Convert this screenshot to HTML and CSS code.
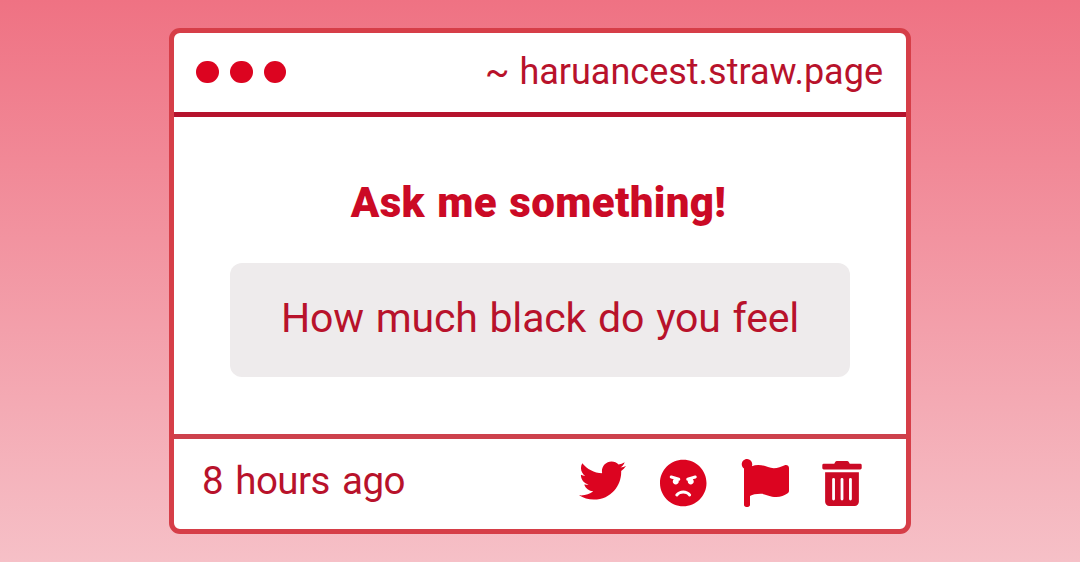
FILE: index.html
```html
<!DOCTYPE html>
<html lang="en">
<head>
  <meta charset="utf-8">
  <title>Ask me something!</title>
  <link rel="stylesheet" href="styles.css">
</head>
<body>
  <div class="card">
    <div class="card-header">
      <div class="dots">
        <span class="dot"></span>
        <span class="dot"></span>
        <span class="dot"></span>
      </div>
      <span class="site">~ haruancest.straw.page</span>
    </div>

    <div class="card-body">
      <h1>Ask me something!</h1>
      <div class="message"><p>How much black do you feel</p></div>
    </div>

    <div class="card-footer">
      <span class="time">8 hours ago</span>
      <div class="actions">
        <svg class="icon twitter" viewBox="0 0 512 512"><path d="M459.37 151.716c.325 4.548.325 9.097.325 13.645 0 138.72-105.583 298.558-298.558 298.558-59.452 0-114.68-17.219-161.137-47.106 8.447.974 16.568 1.299 25.34 1.299 49.055 0 94.213-16.568 130.274-44.832-46.132-.975-84.792-31.188-98.112-72.772 6.498.974 12.995 1.624 19.818 1.624 9.421 0 18.843-1.3 27.614-3.573-48.081-9.747-84.143-51.98-84.143-102.985v-1.299c13.969 7.797 30.214 12.67 47.431 13.319-28.264-18.843-46.781-51.005-46.781-87.391 0-19.492 5.197-37.36 14.294-52.954 51.655 63.675 129.3 105.258 216.365 109.807-1.624-7.797-2.599-15.918-2.599-24.04 0-57.828 46.782-104.934 104.934-104.934 30.213 0 57.502 12.67 76.67 33.137 23.715-4.548 46.456-13.32 66.599-25.34-7.798 24.366-24.366 44.833-46.132 57.827 21.117-2.273 41.584-8.122 60.426-16.243-14.292 20.791-32.161 39.308-52.628 54.253z"/></svg>
        <svg class="icon angry" viewBox="0 0 496 512"><path d="M248 8C111 8 0 119 0 256s111 248 248 248 248-111 248-248S385 8 248 8zM136 240c0-9.3 4.1-17.5 10.5-23.4l-31-9.3c-8.5-2.5-13.3-11.5-10.7-19.9 2.5-8.5 11.4-13.2 19.9-10.7l80 24c8.5 2.5 13.3 11.5 10.7 19.9-2.1 6.9-8.4 11.4-15.3 11.4-.5 0-1.1-.2-1.7-.2.7 2.7 1.7 5.3 1.7 8.2 0 17.7-14.3 32-32 32S136 257.7 136 240zm168 154.2c-27.8-33.4-84.2-33.4-112.1 0-13.5 16.3-38.2-4.2-24.6-20.5 20-24 49.4-37.8 80.6-37.8s60.6 13.8 80.6 37.8c13.8 16.5-11.1 36.6-24.5 20.5zm76.6-186.9l-31 9.3c6.3 5.8 10.5 14.1 10.5 23.4 0 17.7-14.3 32-32 32s-32-14.3-32-32c0-2.9.9-5.6 1.7-8.2-.6.1-1.1.2-1.7.2-6.9 0-13.2-4.5-15.3-11.4-2.5-8.5 2.3-17.4 10.7-19.9l80-24c8.4-2.5 17.4 2.3 19.9 10.7 2.5 8.5-2.3 17.4-10.8 19.9z"/></svg>
        <svg class="icon flag" viewBox="0 0 512 512"><path d="M349.565 98.783C295.978 98.783 251.721 64 184.348 64c-24.955 0-47.309 4.384-68.045 12.013a55.947 55.947 0 0 0 3.586-23.562C118.117 24.015 94.806 1.206 66.338.048 34.345-1.254 8 24.296 8 56c0 19.026 9.497 35.825 24 45.945V488c0 13.255 10.745 24 24 24h16c13.255 0 24-10.745 24-24v-94.4c28.311-12.064 63.582-22.122 114.435-22.122 53.588 0 97.844 34.783 165.217 34.783 48.169 0 86.667-16.294 122.505-40.858C506.84 359.452 512 349.571 512 339.045v-243.1c0-23.393-24.269-38.87-45.485-29.016-34.338 15.948-76.454 31.854-116.95 31.854z"/></svg>
        <svg class="icon trash" viewBox="0 0 448 512"><path d="M32 464a48 48 0 0 0 48 48h288a48 48 0 0 0 48-48V128H32zm272-256a16 16 0 0 1 32 0v224a16 16 0 0 1-32 0zm-96 0a16 16 0 0 1 32 0v224a16 16 0 0 1-32 0zm-96 0a16 16 0 0 1 32 0v224a16 16 0 0 1-32 0zM432 32H312l-9.4-18.7A24 24 0 0 0 281.1 0H166.8a23.72 23.72 0 0 0-21.4 13.3L136 32H16A16 16 0 0 0 0 48v32a16 16 0 0 0 16 16h416a16 16 0 0 0 16-16V48a16 16 0 0 0-16-16z"/></svg>
      </div>
    </div>
  </div>
</body>
</html>
```
FILE: styles.css
```css
* {
  box-sizing: border-box;
}

body {
  margin: 0;
  height: 100vh;
  padding-top: 28px;
  font-family: Roboto, sans-serif;
  color: #b8122b;
  background: linear-gradient(#ef7283, #f6c0c7);
}

.card {
  display: flex;
  flex-direction: column;
  width: 742px;
  height: 506px;
  margin: 0 auto;
  background-color: #fff;
  border: 5px solid #d63e48;
  border-radius: 11px;
}

.card-header {
  display: flex;
  justify-content: space-between;
  align-items: center;
  height: 84px;
  padding: 0 22px 1px;
  border-bottom: 5px solid #b5132d;
}

.dots {
  display: flex;
  gap: 11px;
}

.dot {
  width: 22.8px;
  height: 22.8px;
  border-radius: 50%;
  background-color: #dc0420;
}

.site {
  padding-right: 1px;
  font-size: 36px;
  line-height: 40px;
  word-spacing: 1px;
}

.card-body {
  flex: 1;
  padding: 61px 56px 0;
  text-align: center;
}

h1 {
  margin: 0 0 35px;
  padding-right: 3px;
  font-size: 42px;
  line-height: 50px;
  font-weight: 900;
  letter-spacing: 0.35px;
  word-spacing: 1.5px;
  color: #cb0a25;
}

.message {
  height: 114px;
  padding-top: 30px;
  background-color: #eeebec;
  border-radius: 12px;
}

.message p {
  margin: 0;
  font-size: 41px;
  line-height: 50px;
  letter-spacing: -0.2px;
  word-spacing: 2px;
}

.card-footer {
  display: flex;
  justify-content: space-between;
  height: 95px;
  padding: 18px 44.5px 0 28px;
  border-top: 5px solid #cd414c;
}

.time {
  font-size: 38.5px;
  line-height: 48px;
  letter-spacing: -0.5px;
  word-spacing: 3px;
}

.actions {
  display: flex;
  align-items: flex-start;
  padding-top: 2px;
}

.icon {
  display: block;
  height: 48px;
  fill: #dc0420;
}

.twitter {
  width: 47px;
  height: 47px;
  margin: -2px 34px 0 0;
}

.angry {
  width: 46.5px;
  margin-right: 34px;
}

.flag {
  width: 48px;
  margin-right: 33px;
}

.trash {
  width: 40px;
  height: 45px;
  margin-top: 1.5px;
  fill: #cb0a25;
}
```
